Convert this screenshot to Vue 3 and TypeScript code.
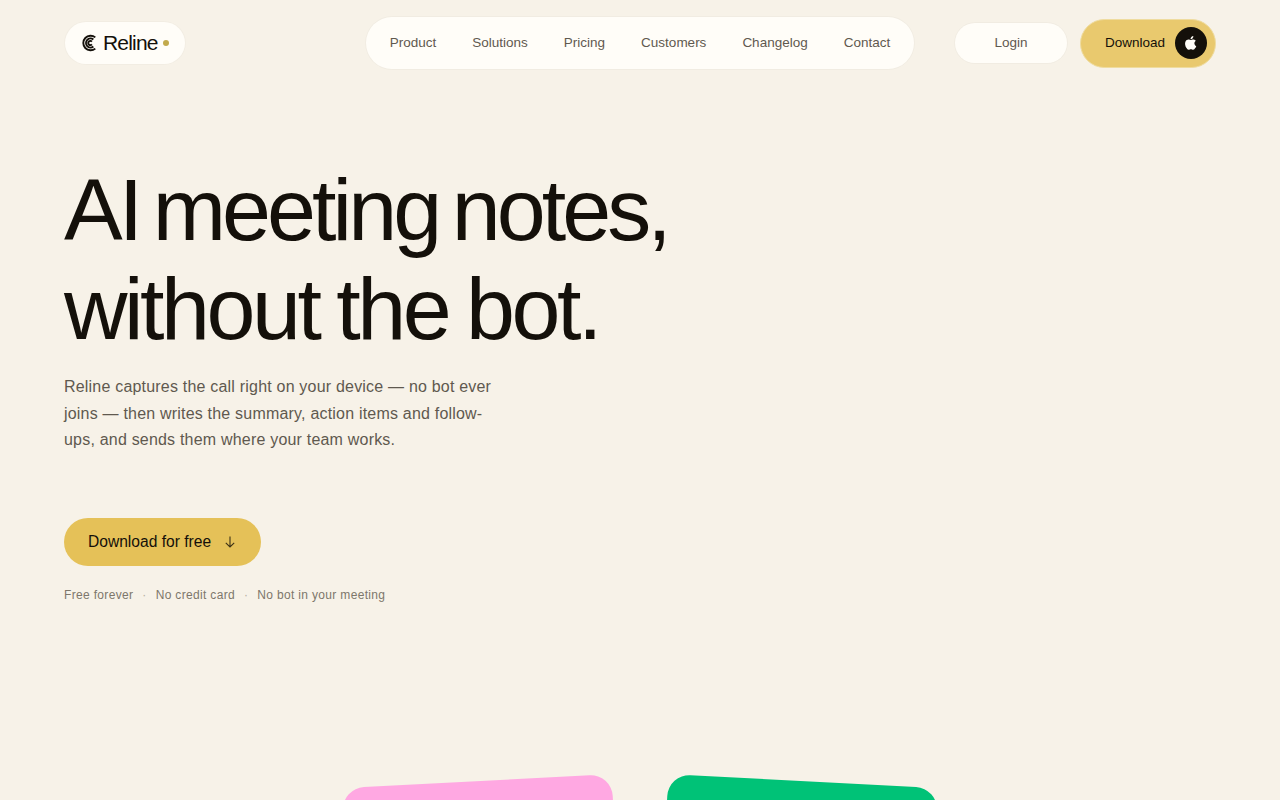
<script setup lang="ts">
const links: string[] = ['Product', 'Solutions', 'Pricing', 'Customers', 'Changelog', 'Contact']
const notes: string[] = ['Free forever', 'No credit card', 'No bot in your meeting']
</script>

<template>
  <div class="page">
    <header class="top">
      <div class="side">
        <a class="logo">
          <svg class="mark" viewBox="0 0 16 16" width="18" height="18" fill="none" stroke="#14100a" stroke-width="1.7">
            <path d="M12.7 3A6.5 6.5 0 1 0 12.7 13" />
            <path d="M11 4.9A4 4 0 1 0 11 11.1" />
            <path d="M9.7 6.7A1.9 1.9 0 1 0 9.7 9.3" />
          </svg>
          <span class="word">Reline</span>
          <i class="dot"></i>
        </a>
      </div>
      <nav class="nav">
        <a v-for="l in links" :key="l">{{ l }}</a>
      </nav>
      <div class="side actions">
        <a class="login">Login</a>
        <a class="dl">
          <span>Download</span>
          <span class="apple">
            <svg viewBox="0 0 24 24" width="16" height="16" fill="#fffdf8"><path d="M17.05 12.54c-.03-2.6 2.12-3.85 2.22-3.91-1.21-1.77-3.09-2.01-3.76-2.04-1.6-.16-3.12.94-3.93.94-.81 0-2.07-.92-3.4-.89-1.75.03-3.36 1.02-4.26 2.58-1.82 3.15-.46 7.82 1.3 10.38.87 1.25 1.9 2.66 3.25 2.61 1.31-.05 1.8-.84 3.38-.84s2.02.84 3.4.82c1.41-.03 2.3-1.28 3.16-2.54 1-1.45 1.41-2.86 1.43-2.93-.03-.01-2.76-1.06-2.79-4.18zM14.46 4.9c.72-.87 1.2-2.08 1.07-3.29-1.03.04-2.29.69-3.03 1.56-.66.77-1.24 2-1.09 3.18 1.15.09 2.33-.59 3.05-1.45z"/></svg>
          </span>
        </a>
      </div>
    </header>

    <section class="hero">
      <h1>
        <span class="line one">AI meeting notes,</span>
        <span class="line two">without the bot.</span>
      </h1>
      <p class="lede">Reline captures the call right on your device — no bot ever joins — then writes the summary, action items and follow-ups, and sends them where your team works.</p>
      <a class="cta">
        <span>Download for free</span>
        <svg viewBox="0 0 14 14" width="14" height="14" fill="none" stroke="#3d3216" stroke-width="1.1"><path d="M7 1.5v10.5M2.8 7.9 7 12l4.2-4.1" /></svg>
      </a>
      <div class="notes">
        <template v-for="(n, i) in notes" :key="n">
          <span v-if="i" class="sep">·</span>
          <span>{{ n }}</span>
        </template>
      </div>
    </section>

    <div class="cards">
      <div class="card pink"></div>
      <div class="card green"></div>
    </div>
  </div>
</template>

<style>
html, body { margin: 0; background: #f7f2e8; overflow: hidden; }
</style>

<style scoped>
.page {
  position: relative;
  height: 800px;
  overflow: hidden;
  background: #f7f2e8;
  font-family: "Liberation Sans", Arial, sans-serif;
  color: #14100a;
}
.top {
  display: grid;
  grid-template-columns: 1fr auto 1fr;
  align-items: center;
  padding: 16px 64px 0;
  height: 54px;
}
.side { display: flex; align-items: center; }
.logo {
  display: flex;
  align-items: center;
  width: 120px;
  height: 42px;
  margin-left: 1px;
  box-sizing: border-box;
  padding: 0 0 0 16px;
  border-radius: 21px;
  background: #fffdf8;
  box-shadow: 0 0 0 1px rgba(20, 16, 10, 0.02);
}
.word { font-size: 21px; letter-spacing: -0.8px; margin-left: 4px; }
.dot { width: 6px; height: 6px; border-radius: 50%; background: #c2aa4c; margin-left: 5px; }
.nav {
  display: flex;
  align-items: center;
  gap: 36px;
  height: 52px;
  box-sizing: border-box;
  padding: 0 24px 2px;
  border-radius: 26px;
  background: #fffdf8;
  box-shadow: 0 0 0 1px rgba(20, 16, 10, 0.025);
  font-size: 13.5px;
  color: #5f594f;
}
.actions { justify-content: flex-end; gap: 13px; }
.login {
  width: 112px;
  height: 40px;
  box-sizing: border-box;
  padding-bottom: 2px;
  display: flex;
  align-items: center;
  justify-content: center;
  border-radius: 20px;
  background: #fffdf8;
  box-shadow: 0 0 0 1px rgba(20, 16, 10, 0.025);
  font-size: 13.5px;
  color: #5f594f;
}
.dl {
  display: flex;
  align-items: center;
  gap: 10px;
  width: 136px;
  height: 49px;
  box-sizing: border-box;
  padding: 0 8px 0 24px;
  justify-content: space-between;
  border: 1px solid #efdc9f;
  border-radius: 25px;
  background: #e9c96e;
  font-size: 13.5px;
  color: #14100a;
}
.dl > span:first-child { margin-top: -2px; }
.apple {
  width: 32px;
  height: 32px;
  border-radius: 50%;
  background: #14100a;
  display: flex;
  align-items: center;
  justify-content: center;
}
.hero { padding: 90px 64px 0; }
h1 {
  margin: 0;
  font-size: 88px;
  line-height: 99px;
  font-weight: 400;
  color: #14100a;
}
.line { display: block; white-space: nowrap; }
.one { letter-spacing: -3.95px; word-spacing: -7px; }
.two { letter-spacing: -3.5px; word-spacing: -3px; }
.lede {
  margin: 16px 0 0;
  width: 440px;
  font-size: 16px;
  line-height: 26.5px;
  color: #5f594f;
  letter-spacing: 0.2px;
}
.cta {
  margin-top: 64px;
  display: inline-flex;
  align-items: center;
  gap: 12px;
  height: 48px;
  padding: 0 24px;
  border-radius: 24px;
  background: #e5c158;
  font-size: 15.6px;
  color: #14100a;
}
.notes {
  margin-top: 22px;
  display: flex;
  gap: 9px;
  font-size: 12px;
  color: #7d776b;
  letter-spacing: 0.33px;
}
.sep { color: #b5afa2; }
.cards { position: absolute; inset: 0; overflow: hidden; pointer-events: none; }
.card { position: absolute; width: 270px; height: 200px; border-radius: 22px; }
.pink { left: 347px; top: 781px; background: #ffa8e2; transform: rotate(-3deg); }
.green { left: 663px; top: 781px; background: #00c277; transform: rotate(3deg); }
</style>
